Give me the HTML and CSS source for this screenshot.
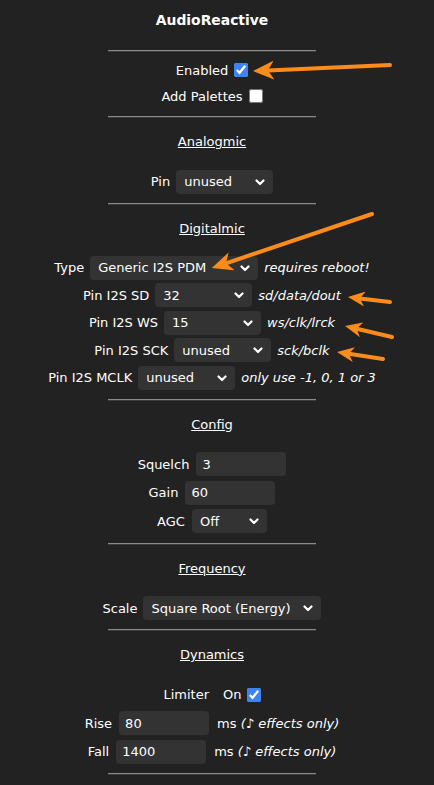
FILE: index.html
```html
<!DOCTYPE html>
<html>
<head>
<meta charset="utf-8">
<link rel="stylesheet" href="styles.css">
</head>
<body>
<div class="page">
  <h3 class="title">AudioReactive</h3>
  <hr class="sep first">
  <div class="rows top">
    <div class="row cb"><span>Enabled</span><input type="checkbox" checked></div>
    <div class="row cb"><span>Add Palettes</span><input type="checkbox"></div>
  </div>

  <hr class="sep">
  <div class="head"><u>Analogmic</u></div>
  <div class="rows">
    <div class="row"><span>Pin</span><span class="sel w97"><select><option>unused</option></select><svg class="chev" viewBox="0 0 10 7"><path d="M1.5 1.5 L5 5 L8.5 1.5"/></svg></span></div>
  </div>

  <hr class="sep">
  <div class="head"><u>Digitalmic</u></div>
  <div class="rows">
    <div class="row t"><span>Type</span><span class="sel w168"><select><option>Generic I2S PDM</option></select><svg class="chev" viewBox="0 0 10 7"><path d="M1.5 1.5 L5 5 L8.5 1.5"/></svg></span><i>requires reboot!</i></div>
    <div class="row t"><span>Pin I2S SD</span><span class="sel w97"><select><option>32</option></select><svg class="chev" viewBox="0 0 10 7"><path d="M1.5 1.5 L5 5 L8.5 1.5"/></svg></span><i>sd/data/dout</i></div>
    <div class="row t"><span>Pin I2S WS</span><span class="sel w97"><select><option>15</option></select><svg class="chev" viewBox="0 0 10 7"><path d="M1.5 1.5 L5 5 L8.5 1.5"/></svg></span><i>ws/clk/lrck</i></div>
    <div class="row t"><span>Pin I2S SCK</span><span class="sel w97"><select><option>unused</option></select><svg class="chev" viewBox="0 0 10 7"><path d="M1.5 1.5 L5 5 L8.5 1.5"/></svg></span><i>sck/bclk</i></div>
    <div class="row t"><span>Pin I2S MCLK</span><span class="sel w97"><select><option>unused</option></select><svg class="chev" viewBox="0 0 10 7"><path d="M1.5 1.5 L5 5 L8.5 1.5"/></svg></span><i>only use -1, 0, 1 or 3</i></div>
  </div>

  <hr class="sep">
  <div class="head"><u>Config</u></div>
  <div class="rows">
    <div class="row l"><span>Squelch</span><input class="num" type="text" value="3"></div>
    <div class="row l"><span>Gain</span><input class="num" type="text" value="60"></div>
    <div class="row l"><span>AGC</span><span class="sel w75"><select><option>Off</option></select><svg class="chev" viewBox="0 0 10 7"><path d="M1.5 1.5 L5 5 L8.5 1.5"/></svg></span></div>
  </div>

  <hr class="sep">
  <div class="head"><u>Frequency</u></div>
  <div class="rows">
    <div class="row"><span>Scale</span><span class="sel w178"><select><option>Square Root (Energy)</option></select><svg class="chev" viewBox="0 0 10 7"><path d="M1.5 1.5 L5 5 L8.5 1.5"/></svg></span></div>
  </div>

  <hr class="sep">
  <div class="head"><u>Dynamics</u></div>
  <div class="rows">
    <div class="row l"><span>Limiter</span><span class="on">On</span><input type="checkbox" checked></div>
    <div class="row l"><span>Rise</span><input class="num" type="text" value="80"><span class="unit">ms <i>(♪ effects only)</i></span></div>
    <div class="row l"><span>Fall</span><input class="num" type="text" value="1400"><span class="unit">ms <i>(♪ effects only)</i></span></div>
  </div>
  <hr class="sep">

  <svg class="arrows" width="434" height="785" viewBox="0 0 434 785">
    <defs>
      <marker id="big" viewBox="0 0 21 19" refX="6" refY="9.5" markerWidth="21" markerHeight="19" orient="auto" markerUnits="userSpaceOnUse">
        <path d="M0 0 L21 9.5 L0 19 L6 9.5 Z" fill="#fb8c1c"/>
      </marker>
      <marker id="small" viewBox="0 0 17 15" refX="5" refY="7.5" markerWidth="17" markerHeight="15" orient="auto" markerUnits="userSpaceOnUse">
        <path d="M0 0 L17 7.5 L0 15 L5 7.5 Z" fill="#fb8c1c"/>
      </marker>
    </defs>
    <g stroke="#fb8c1c" stroke-width="4" fill="none" stroke-linecap="round">
      <line x1="390" y1="65" x2="268" y2="70.4" marker-end="url(#big)"/>
      <line x1="372" y1="214" x2="226" y2="263.3" marker-end="url(#big)"/>
      <line x1="390" y1="302" x2="359.9" y2="298.4" marker-end="url(#small)"/>
      <line x1="392" y1="337" x2="356.7" y2="328.7" marker-end="url(#small)"/>
      <line x1="383" y1="359" x2="348.9" y2="353.8" marker-end="url(#small)"/>
    </g>
  </svg>
</div>
</body>
</html>
```
FILE: styles.css
```css
html, body {
  margin: 0;
  background: #222;
}
body {
  font-family: "DejaVu Sans", Verdana, sans-serif;
  font-size: 13px;
  color: #fff;
}
.page {
  width: 424px;
  height: 785px;
  position: relative;
  text-align: center;
}
.title {
  margin: 0;
  height: 40px;
  line-height: 40px;
  font-size: 13.9px;
  font-weight: bold;
}
.sep {
  width: 208px;
  height: 0;
  margin: 7px auto 0;
  border: 0;
  border-top: 1px solid #8a8a8a;
  border-bottom: 1px solid #3c3c3c;
}
.sep.first {
  margin-top: 10px;
}
.head {
  margin-top: 11px;
  height: 26px;
  line-height: 26px;
}
.rows {
  margin-top: 12.5px;
}
.rows.top {
  margin-top: 5px;
}
.row {
  height: 28px;
  display: flex;
  justify-content: center;
  align-items: center;
  gap: 6px;
  white-space: nowrap;
}
.row.cb { height: 26px; }
.row.t { height: 27.5px; }
.row.l { height: 28.5px; gap: 7px; }
.row input[type="checkbox"] {
  width: 14px;
  height: 14px;
  margin: 0;
  accent-color: #3d84f0;
}
.sel {
  position: relative;
  display: inline-block;
  height: 24px;
}
.sel select {
  appearance: none;
  -webkit-appearance: none;
  width: 100%;
  height: 24px;
  margin: 0;
  padding: 0 20px 0 8px;
  background: #333;
  color: #fff;
  border: 0;
  border-radius: 4px;
  font-family: inherit;
  font-size: 13px;
  outline: none;
}
.chev {
  position: absolute;
  right: 8px;
  top: 9px;
  width: 10px;
  height: 7px;
  pointer-events: none;
}
.chev path {
  fill: none;
  stroke: #fff;
  stroke-width: 2.2;
  stroke-linecap: round;
  stroke-linejoin: round;
}
.w97 { width: 97px; }
.w168 { width: 168px; }
.w75 { width: 75px; }
.w178 { width: 178px; }
.num {
  width: 90px;
  height: 24px;
  box-sizing: border-box;
  margin: 0;
  padding: 0 6px;
  background: #333;
  color: #fff;
  border: 0;
  border-radius: 4px;
  font-family: inherit;
  font-size: 13px;
  outline: none;
}
.on {
  margin-left: 7px;
}
.row.l .on + input {
  margin-left: -2px;
}
.unit {
  margin-left: 1px;
}
.arrows {
  position: absolute;
  left: 0;
  top: 0;
  pointer-events: none;
}
```
